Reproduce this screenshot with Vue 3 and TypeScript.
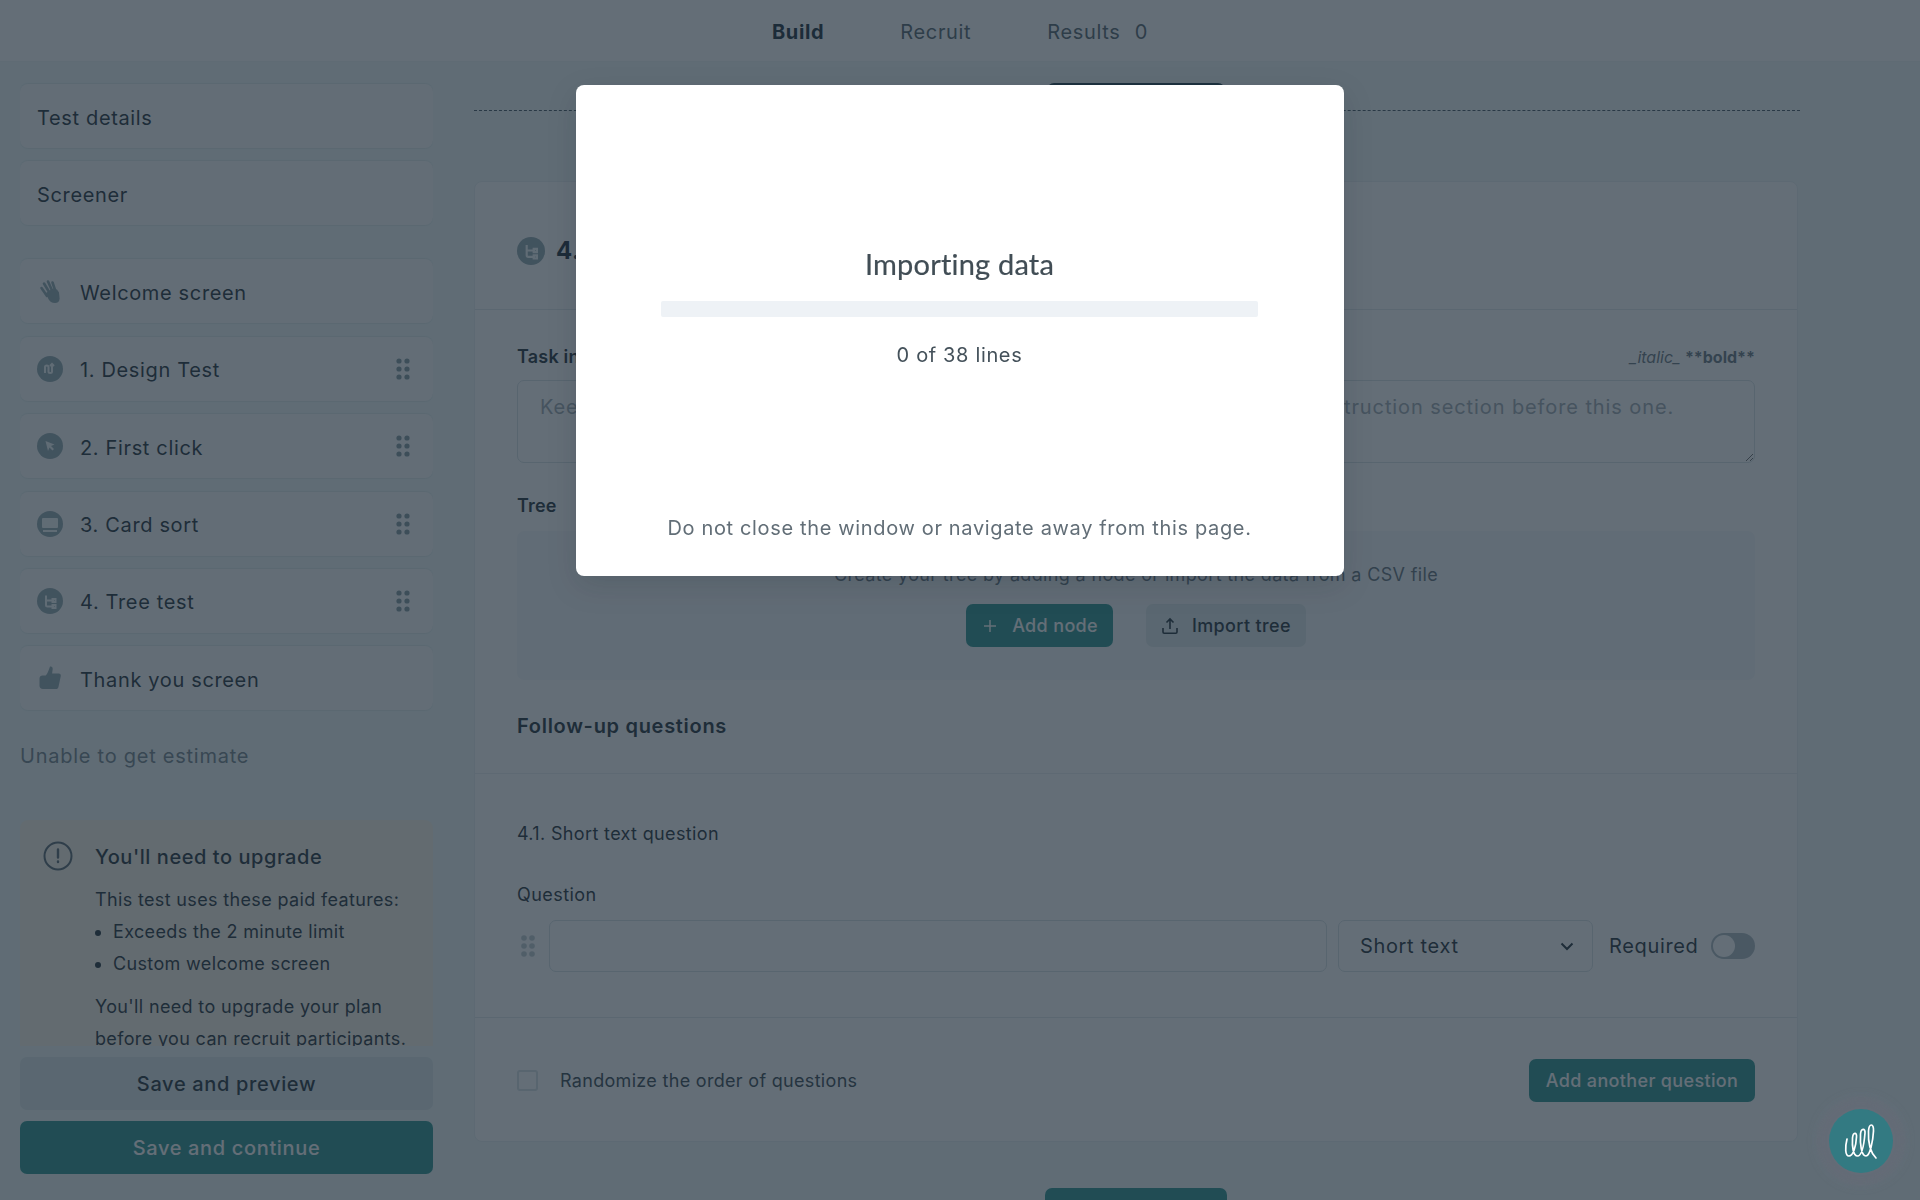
<script setup lang="ts">
type Step = { label: string; icon: string; drag: boolean }

const steps: Step[] = [
  { label: 'Welcome screen', icon: 'wave', drag: false },
  { label: '1. Design Test', icon: 'design', drag: true },
  { label: '2. First click', icon: 'click', drag: true },
  { label: '3. Card sort', icon: 'card', drag: true },
  { label: '4. Tree test', icon: 'tree', drag: true },
  { label: 'Thank you screen', icon: 'thumb', drag: false },
]

const dots = [
  [3, 3], [11, 3],
  [3, 11], [11, 11],
  [3, 19], [11, 19],
]
</script>

<template>
  <div class="page">
    <header class="topbar">
      <span class="tab active">Build</span>
      <span class="tab">Recruit</span>
      <span class="tab">Results <span class="count">0</span></span>
    </header>

    <div class="body">
      <aside class="sidebar">
        <div class="side-scroll">
          <div class="side-group">
            <div class="side-item plain">Test details</div>
            <div class="side-item plain">Screener</div>
          </div>

          <div class="side-group steps">
            <div v-for="step in steps" :key="step.label" class="side-item">
              <span class="step-icon">
                <svg v-if="step.icon === 'wave'" width="26" height="26" viewBox="0 0 26 26">
                  <g class="icon-stroke" stroke-width="2.6" stroke-linecap="round">
                    <path d="M4.500 10l5.500 8" />
                    <path d="M7 5.500l6 10" />
                    <path d="M11 3.500l4.500 10" />
                    <path d="M15.500 4.500l3 9" />
                  </g>
                  <path class="icon-fill" d="M9 15l6-4 5 .5 2 3 .6 6c0 3-2 4.500-4.600 4.500-3.400 0-5-1.600-6.600-4z" />
                </svg>
                <svg v-else-if="step.icon === 'thumb'" width="26" height="26" viewBox="0 0 26 26">
                  <path class="icon-fill" d="M13 1.500c1.900-.4 2.900 1 2.700 2.600l-.6 4.400h6.500c1.700 0 2.500 1.300 2.200 2.600l-2.300 10.600c-.3 1.400-1.200 2.300-2.500 2.300H6c-2.300 0-3.500-1.300-3.500-3.200v-7.300c0-2 1.300-3 3-3h3.200c1.800-2 2.800-4.500 4.300-9z" />
                </svg>
                <svg v-else width="26" height="26" viewBox="0 0 26 26">
                  <circle class="icon-fill" cx="13" cy="13" r="13" />
                  <path v-if="step.icon === 'design'" class="icon-line" d="M8 17v-6c0-2 3.500-2 3.500 0v4.500c0 2 3.500 2 3.500 0V8m-2 2l2-2 2 2" />
                  <path v-else-if="step.icon === 'click'" class="icon-solid" d="M8.500 8l9 3.500-3.500 1.500 3 3-1.500 1.500-3-3-1.500 3.500z" />
                  <g v-else-if="step.icon === 'card'">
                    <rect class="icon-solid" x="5" y="7" width="16" height="10" rx="1" />
                    <path class="icon-line" d="M6 20h14" />
                  </g>
                  <path v-else class="icon-line" d="M9 7.500V17c0 1 .5 1.500 1.500 1.500H17M9 12.500h8M15.500 11h3v3h-3zM15.500 17h3v3h-3z" />
                </svg>
              </span>
              <span class="step-label">{{ step.label }}</span>
              <svg v-if="step.drag" class="grip" width="14" height="22" viewBox="0 0 14 22">
                <circle v-for="(d, i) in dots" :key="i" :cx="d[0]" :cy="d[1]" r="2.600" />
              </svg>
            </div>
          </div>

          <p class="estimate">Unable to get estimate</p>

          <section class="upgrade">
            <svg class="alert" width="30" height="30" viewBox="0 0 30 30">
              <circle cx="15" cy="15" r="13.500" fill="none" stroke-width="2" />
              <path d="M15 8.500v8M15 20.500v.5" fill="none" stroke-width="2.400" stroke-linecap="round" />
            </svg>
            <div class="upgrade-text">
              <h3>You'll need to upgrade</h3>
              <p>This test uses these paid features:</p>
              <ul>
                <li>Exceeds the 2 minute limit</li>
                <li>Custom welcome screen</li>
              </ul>
              <p>You'll need to upgrade your plan before you can recruit participants.</p>
            </div>
          </section>
        </div>

        <div class="side-actions">
          <button class="btn big secondary">Save and preview</button>
          <button class="btn big primary">Save and continue</button>
        </div>
      </aside>

      <main class="main">
        <div class="adder"><button class="btn primary add-section">Add section</button></div>

        <section class="card">
          <div class="card-head">
            <svg width="28" height="28" viewBox="0 0 26 26">
              <circle class="icon-fill" cx="13" cy="13" r="13" />
              <path class="icon-line" d="M9 7.500V17c0 1 .5 1.500 1.500 1.500H17M9 12.500h8M15.500 11h3v3h-3zM15.500 17h3v3h-3z" />
            </svg>
            <h2>4. Tree test</h2>
          </div>

          <div class="card-block">
            <div class="label-row">
              <label>Task instructions</label>
              <span class="hint"><i>_italic_</i> <b>**bold**</b></span>
            </div>
            <textarea class="task" readonly placeholder="Keep your instructions short and to the point. For long text you can add an instruction section before this one."></textarea>

            <label class="tree-label">Tree</label>
            <div class="tree-panel">
              <p>Create your tree by adding a node or import the data from a CSV file</p>
              <div class="tree-actions">
                <button class="btn primary small add-node">
                  <svg width="14" height="14" viewBox="0 0 14 14"><path d="M7 1v12M1 7h12" fill="none" stroke="#fff" stroke-width="1.500" /></svg>
                  Add node
                </button>
                <button class="btn secondary small import-tree">
                  <svg width="18" height="18" viewBox="0 0 18 18"><path d="M2 11v4c0 .8.500 1.200 1.200 1.200h11.600c.7 0 1.200-.4 1.200-1.200v-4M9 12V2M5.500 5.500L9 2l3.500 3.500" fill="none" stroke="#16262f" stroke-width="1.600" /></svg>
                  Import tree
                </button>
              </div>
            </div>

            <h3 class="follow">Follow-up questions</h3>
          </div>

          <div class="card-block question">
            <p class="q-title">4.1. Short text question</p>
            <label class="q-label">Question</label>
            <div class="q-row">
              <svg class="q-grip" width="14" height="22" viewBox="0 0 14 22">
                <circle v-for="(d, i) in dots" :key="i" :cx="d[0]" :cy="d[1]" r="2.800" />
              </svg>
              <div class="field q-input"></div>
              <div class="field q-select">
                <span>Short text</span>
                <svg width="14" height="9" viewBox="0 0 14 9"><path d="M1.500 1.500L7 7l5.500-5.500" fill="none" stroke="#16262f" stroke-width="2" /></svg>
              </div>
              <span class="required">Required</span>
              <span class="switch"><span class="knob"></span></span>
            </div>
          </div>

          <div class="card-foot">
            <span class="check"></span>
            <span class="check-label">Randomize the order of questions</span>
            <button class="btn primary small another">Add another question</button>
          </div>
        </section>

        <div class="adder lower"><button class="btn primary add-section">Add section</button></div>
      </main>
    </div>

    <div class="overlay">
      <div class="modal">
        <h2 class="modal-title">Importing data</h2>
        <div class="bar"></div>
        <p class="lines">0 of 38 lines</p>
        <p class="warn">Do not close the window or navigate away from this page.</p>
      </div>
    </div>

    <div class="chat">
      <svg width="64" height="64" viewBox="0 0 64 64">
        <path d="M18 30C16 38 16 47 20 47 24 47 27 38 27.500 28 28 23 24 23 23.500 29 23 37 24 47 28.500 47 33 47 35 36 36 24 36.500 19 32 19 31.500 25 31 34 32 47 37 47 41 47 44 32 44.500 22 45 14 40 14 39.500 22 39 32 41 43 47 49" fill="none" stroke="#fff" stroke-width="1.700" stroke-linecap="round" />
      </svg>
    </div>
  </div>
</template>

<style>
html,
body {
  margin: 0;
  height: 100%;
  overflow: hidden;
}
</style>

<style scoped>
.page {
  height: 100vh;
  display: flex;
  flex-direction: column;
  overflow: hidden;
  background: #f0f9f9;
  color: #16262f;
  font-family: Inter, "Liberation Sans", sans-serif;
  font-size: 20px;
  letter-spacing: 0.65px;
}

/* top tabs */
.topbar {
  height: 62px;
  flex: none;
  box-sizing: border-box;
  padding-top: 2px;
  display: flex;
  align-items: center;
  justify-content: center;
  gap: 76px;
  background: #fff;
  border-bottom: 1px solid #eef3f4;
}

.tab {
  color: #4c5c66;
}

.tab.active {
  font-weight: 700;
  color: #0f2230;
}

.count {
  margin-left: 8px;
}

.body {
  flex: 1;
  min-height: 0;
  display: flex;
}

/* sidebar */
.sidebar {
  width: 474px;
  flex: none;
  box-sizing: border-box;
  padding: 0 41px 26px 20px;
  display: flex;
  flex-direction: column;
}

.side-scroll {
  flex: 1;
  min-height: 0;
  overflow: hidden;
  padding-top: 22px;
}

.side-group {
  display: flex;
  flex-direction: column;
  gap: 13.400px;
}

.steps {
  margin-top: 34px;
}

.side-item {
  height: 64px;
  flex: none;
  box-sizing: border-box;
  display: flex;
  align-items: center;
  padding: 3px 22px 0 16px;
  background: #fbfcfc;
  border-radius: 8px;
  box-shadow: 0 1px 1px rgba(30, 50, 60, 0.07), 0 -1px 1px rgba(30, 50, 60, 0.07);
}

.side-item.plain {
  padding-left: 17px;
}

.step-icon {
  width: 26px;
  height: 26px;
  flex: none;
  margin-right: 17px;
  margin-left: 1px;
  margin-top: -3px;
  display: flex;
}

.step-label {
  flex: 1;
}

.icon-fill {
  fill: #8ba3aa;
}

.icon-stroke {
  stroke: #8ba3aa;
  fill: none;
}

.icon-line {
  fill: none;
  stroke: #f2f8f9;
  stroke-width: 2;
}

.icon-solid {
  fill: #f2f8f9;
}

.grip {
  fill: #7c949c;
  margin-top: -3px;
  margin-right: 1px;
}

.estimate {
  margin: 32px 0 0;
  line-height: 28px;
  color: #6d7c85;
  letter-spacing: 0.75px;
}

.upgrade {
  margin-top: 50px;
  padding: 21px 23px 24px;
  display: flex;
  gap: 22px;
  background: #faf5e8;
  border-radius: 8px 8px 0 0;
}

.alert {
  flex: none;
  stroke: #4f5f69;
}

.upgrade-text {
  min-width: 0;
  letter-spacing: 0.35px;
}

.upgrade h3 {
  margin: 0 0 11px;
  font-size: 20px;
  font-weight: 500;
  line-height: 32px;
  letter-spacing: 0.55px;
}

.upgrade p {
  margin: 0;
  font-size: 18px;
  line-height: 32px;
}

.upgrade ul {
  margin: 0 0 11px;
  padding: 0 0 0 18px;
  font-size: 18px;
  line-height: 32px;
}

.side-actions {
  flex: none;
  padding-top: 11px;
  display: flex;
  flex-direction: column;
  gap: 11px;
}

/* buttons */
.btn {
  box-sizing: border-box;
  border: none;
  border-radius: 7px;
  font-family: inherit;
  letter-spacing: inherit;
  font-weight: 500;
  white-space: nowrap;
}

.btn.primary {
  background: #1f8e8a;
  color: #fff;
}

.btn.secondary {
  background: #dce7ea;
  color: #16262f;
}

.btn.big {
  height: 53px;
  font-size: 20px;
}

.btn.small {
  height: 43px;
  display: inline-flex;
  align-items: center;
  gap: 13px;
  padding: 0 17px;
  font-size: 18px;
  letter-spacing: 0.35px;
}

.btn.small.add-node {
  gap: 15px;
  padding: 0 15px 0 17px;
}

.btn.small.import-tree {
  padding: 0 15px;
}

/* main column */
.main {
  width: 1324px;
  flex: none;
  padding-top: 21px;
}

.adder {
  position: relative;
  height: 52px;
  display: flex;
  justify-content: center;
}

.adder::before {
  content: "";
  position: absolute;
  left: 0;
  right: -2px;
  top: 27px;
  border-top: 1px dashed #3c4f5a;
}

.adder.lower {
  margin-top: 46px;
}

.adder.lower::before {
  display: none;
}

.add-section {
  position: relative;
  width: 178px;
  height: 52px;
  font-size: 20px;
}

.btn.primary.add-section {
  background: #123a42;
}

.adder.lower .btn.primary.add-section {
  width: 182px;
  background: #1f8e8a;
}

.card {
  margin-top: 46px;
  box-sizing: border-box;
  height: 961px;
  background: #fff;
  border: 1px solid #e8eef0;
  border-radius: 8px;
  display: flex;
  flex-direction: column;
}

.card-head {
  height: 128px;
  flex: none;
  box-sizing: border-box;
  padding: 10px 42px 0;
  display: flex;
  align-items: center;
  gap: 11px;
  border-bottom: 1px solid #dfe7ea;
}

.card-head h2 {
  margin: 0;
  font-size: 24px;
  font-weight: 700;
  color: #0f2230;
}

.card-block {
  flex: none;
  padding: 33px 42px 32px;
  border-bottom: 1px solid #e9eff1;
}

.label-row {
  display: flex;
  justify-content: space-between;
  align-items: center;
  line-height: 28px;
}

label {
  display: block;
  font-size: 18px;
  line-height: 28px;
  letter-spacing: 0.2px;
}

.label-row label,
.tree-label {
  font-weight: 600;
}

.hint {
  font-size: 16px;
  color: #5f6f79;
  letter-spacing: 0;
}

.task {
  display: block;
  width: 100%;
  height: 83px;
  margin-top: 9px;
  box-sizing: border-box;
  padding: 12px 22px;
  border: 1px solid #d5dfe3;
  border-radius: 7px;
  font-family: inherit;
  font-size: 20px;
  letter-spacing: 0.9px;
  line-height: 28px;
  background: #fff;
}

.task::placeholder {
  color: #9aa6ad;
}

.tree-label {
  margin-top: 29px;
}

.tree-panel {
  margin-top: 11px;
  padding: 30px 0 33px;
  background: #f6f9fa;
  border-radius: 7px;
  text-align: center;
}

.tree-panel p {
  margin: 0;
  font-size: 18px;
  line-height: 28px;
  letter-spacing: 0.35px;
  color: #5a6a74;
}

.tree-actions {
  margin-top: 15px;
  display: flex;
  justify-content: center;
  gap: 33px;
}

.follow {
  margin: 31px 0 0;
  font-size: 20px;
  font-weight: 600;
  line-height: 30px;
  letter-spacing: 0.7px;
}

.question {
  padding-top: 46px;
  padding-bottom: 45px;
  border-bottom: 1px solid #dfe7ea;
}

.q-title {
  margin: 0;
  font-size: 18px;
  line-height: 28px;
  letter-spacing: 0.35px;
}

.q-label {
  margin-top: 33px;
  letter-spacing: 0.45px;
}

.q-row {
  margin-top: 11px;
  display: flex;
  align-items: center;
}

.q-grip {
  fill: #bcc9ce;
  flex: none;
  margin: 0 14px 0 4px;
}

.field {
  height: 52px;
  box-sizing: border-box;
  border: 1px solid #d5dfe3;
  border-radius: 7px;
  background: #fff;
}

.q-input {
  flex: 1;
}

.q-select {
  width: 255px;
  flex: none;
  margin-left: 11px;
  padding: 0 18px 0 21px;
  display: flex;
  align-items: center;
  justify-content: space-between;
}

.required {
  margin-left: 16px;
  flex: none;
  width: 102px;
}

.switch {
  width: 44px;
  height: 26px;
  flex: none;
  box-sizing: border-box;
  padding: 2px;
  border-radius: 13px;
  background: #a7b6bd;
}

.knob {
  display: block;
  width: 22px;
  height: 22px;
  border-radius: 50%;
  background: #fff;
}

.card-foot {
  flex: 1;
  padding: 2px 42px 0;
  display: flex;
  align-items: center;
}

.check {
  width: 21px;
  height: 21px;
  box-sizing: border-box;
  border: 2px solid #d5dfe3;
  border-radius: 3px;
  background: #fff;
}

.check-label {
  margin-left: 22px;
  flex: 1;
  font-size: 18px;
  letter-spacing: 0.31px;
  color: #2d3d47;
}

.btn.small.another {
  width: 226px;
  justify-content: center;
  padding: 0;
}

/* import modal */
.overlay {
  position: fixed;
  inset: 0;
  background: rgba(34, 49, 61, 0.7);
  display: flex;
  justify-content: center;
  align-items: flex-start;
  padding-top: 85px;
}

.modal {
  width: 768px;
  height: 491px;
  box-sizing: border-box;
  padding: 162px 86px 34px 85px;
  background: #fff;
  border-radius: 8px;
  display: flex;
  flex-direction: column;
  align-items: stretch;
  text-align: center;
  box-shadow: 0 10px 30px rgba(20, 30, 40, 0.15);
}

.modal-title {
  margin: -1px 0 1px;
  font-family: Lato, "Liberation Sans", sans-serif;
  font-size: 29px;
  font-weight: 400;
  line-height: 36px;
  color: #414d55;
  letter-spacing: 0.2px;
  -webkit-text-stroke: 0.2px #414d55;
}

.bar {
  height: 16px;
  margin-top: 18px;
  background: #eef2f6;
  border-radius: 2px;
}

.lines {
  margin: 24px 0 0;
  line-height: 28px;
  color: #44515a;
}

.warn {
  margin: auto 0 0;
  line-height: 28px;
  color: #626e77;
  white-space: nowrap;
}

/* chat launcher */
.chat {
  position: fixed;
  left: 1829px;
  top: 1109px;
  width: 64px;
  height: 64px;
  border-radius: 50%;
  background: #337a82;
  box-shadow: 0 0 8px 13px rgba(110, 105, 120, 0.35);
}
</style>
